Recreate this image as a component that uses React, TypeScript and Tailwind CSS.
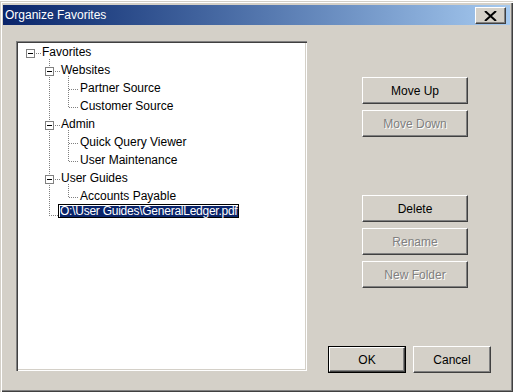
import React from "react";

const font = { fontFamily: '"Liberation Sans", Arial, sans-serif' };

type Row = { t: string; l: number };
const rows: Row[] = [
  { t: "Favorites", l: 0 },
  { t: "Websites", l: 1 },
  { t: "Partner Source", l: 2 },
  { t: "Customer Source", l: 2 },
  { t: "Admin", l: 1 },
  { t: "Quick Query Viewer", l: 2 },
  { t: "User Maintenance", l: 2 },
  { t: "User Guides", l: 1 },
  { t: "Accounts Payable", l: 2 },
  { t: "O:\\User Guides\\GeneralLedger.pdf", l: 3 },
];

const padFor = ["pl-[26px]", "pl-[45px]", "pl-[64px]", "pl-[42px]"];

function Btn({
  label,
  disabled,
  className,
}: {
  label: string;
  disabled?: boolean;
  className?: string;
}) {
  return (
    <div
      className={
        "flex items-center justify-center border border-t-white border-l-white border-r-[#404040] border-b-[#404040] shadow-[inset_-1px_-1px_0_#808080] bg-[#d4d0c8] text-[12px] " +
        (disabled ? "text-[#808080] [text-shadow:1px_1px_0_#ffffff] " : "text-black ") +
        (className ?? "")
      }
    >
      {label}
    </div>
  );
}

function Dot({ x1, y1, x2, y2 }: { x1: number; y1: number; x2: number; y2: number }) {
  const v = x1 === x2;
  return (
    <line
      x1={v ? x1 + 0.5 : x1}
      y1={v ? y1 : y1 + 0.5}
      x2={v ? x2 + 0.5 : x2}
      y2={v ? y2 : y2 + 0.5}
      stroke="#808080"
      strokeWidth={1}
      strokeDasharray="1 1"
      shapeRendering="crispEdges"
    />
  );
}

function Minus({ x, y }: { x: number; y: number }) {
  return (
    <g shapeRendering="crispEdges">
      <rect x={x + 0.5} y={y + 0.5} width={8} height={8} fill="#fff" stroke="#808080" />
      <line x1={x + 2} x2={x + 7} y1={y + 4.5} y2={y + 4.5} stroke="#000" />
    </g>
  );
}

function TreeLines() {
  return (
    <svg className="absolute inset-0 pointer-events-none" width={291} height={330}>
      <Dot x1={20} y1={12} x2={25} y2={12} />
      <Dot x1={33} y1={18} x2={33} y2={175} />
      <Dot x1={39} y1={30} x2={44} y2={30} />
      <Dot x1={39} y1={84} x2={44} y2={84} />
      <Dot x1={39} y1={138} x2={44} y2={138} />
      <Dot x1={33} y1={174} x2={42} y2={174} />
      <Dot x1={52} y1={35} x2={52} y2={67} />
      <Dot x1={53} y1={48} x2={63} y2={48} />
      <Dot x1={53} y1={66} x2={63} y2={66} />
      <Dot x1={52} y1={89} x2={52} y2={121} />
      <Dot x1={53} y1={102} x2={63} y2={102} />
      <Dot x1={53} y1={120} x2={63} y2={120} />
      <Dot x1={52} y1={143} x2={52} y2={157} />
      <Dot x1={53} y1={156} x2={63} y2={156} />
      <Minus x={10} y={8} />
      <Minus x={29} y={26} />
      <Minus x={29} y={80} />
      <Minus x={29} y={134} />
    </svg>
  );
}

export default function App() {
  return (
    <div
      style={font}
      className="w-[513px] h-[392px] bg-[#d4d0c8] overflow-hidden flex flex-col pt-[4px] px-[3px] shadow-[inset_1px_1px_0_#d4d0c8,inset_2px_2px_0_#ffffff,inset_-1px_-1px_0_#404040,inset_-2px_-2px_0_#808080] border-t border-t-white"
    >
      {/* Title bar */}
      <div className="h-[20px] flex items-center justify-between bg-gradient-to-r from-[#0a246a] to-[#a6caf0] pl-[2px] pr-[4px]">
        <span className="text-white text-[12px] leading-none">Organize Favorites</span>
        <div className="w-[31px] h-[17px] mt-[1px] flex items-center justify-center border border-t-white border-l-white border-r-[#404040] border-b-[#404040] shadow-[inset_-1px_-1px_0_#808080] bg-[#d4d0c8]">
          <svg width="13" height="10" viewBox="0 0 13 10">
            <path d="M1 0 L12 10 M12 0 L1 10" stroke="#000" strokeWidth="2" />
          </svg>
        </div>
      </div>

      {/* Body */}
      <div className="flex pl-[13px] pt-[16px]">
        <div className="relative w-[291px] h-[330px] bg-white shadow-[inset_1px_1px_0_#808080,inset_2px_2px_0_#404040,inset_-1px_-1px_0_#ffffff,inset_-2px_-2px_0_#d4d0c8]">
          <TreeLines />
          <div className="relative flex flex-col pt-[2px] text-[12px] text-black">
            {rows.map((r, i) => (
              <div key={i} className={"h-[18px] flex items-center leading-[18px] " + padFor[r.l]}>
                {r.l === 3 ? (
                  <span className="relative -top-[3px] flex border border-black bg-white pt-[1px] pl-[1px]">
                    <span className="h-[11px] leading-[11px] bg-[#0a246a] text-white pr-[1px] tracking-[-0.25px] whitespace-nowrap">
                      {r.t}
                    </span>
                  </span>
                ) : (
                  <span className="whitespace-nowrap">{r.t}</span>
                )}
              </div>
            ))}
          </div>
        </div>

        <div className="flex flex-col">
          <div className="flex flex-col gap-[6px] pl-[55px] pt-[36px]">
            <Btn label="Move Up" className="w-[106px] h-[27px]" />
            <Btn label="Move Down" disabled className="w-[106px] h-[27px]" />
          </div>
          <div className="flex flex-col gap-[6px] pl-[55px] pt-[58px]">
            <Btn label="Delete" className="w-[106px] h-[27px]" />
            <Btn label="Rename" disabled className="w-[106px] h-[27px]" />
            <Btn label="New Folder" disabled className="w-[106px] h-[27px]" />
          </div>
          <div className="flex gap-[7px] pl-[21px] pt-[58px]">
            <div className="w-[78px] h-[27px] border border-black flex">
              <Btn label="OK" className="flex-1" />
            </div>
            <Btn label="Cancel" className="w-[78px] h-[27px]" />
          </div>
        </div>
      </div>
    </div>
  );
}
